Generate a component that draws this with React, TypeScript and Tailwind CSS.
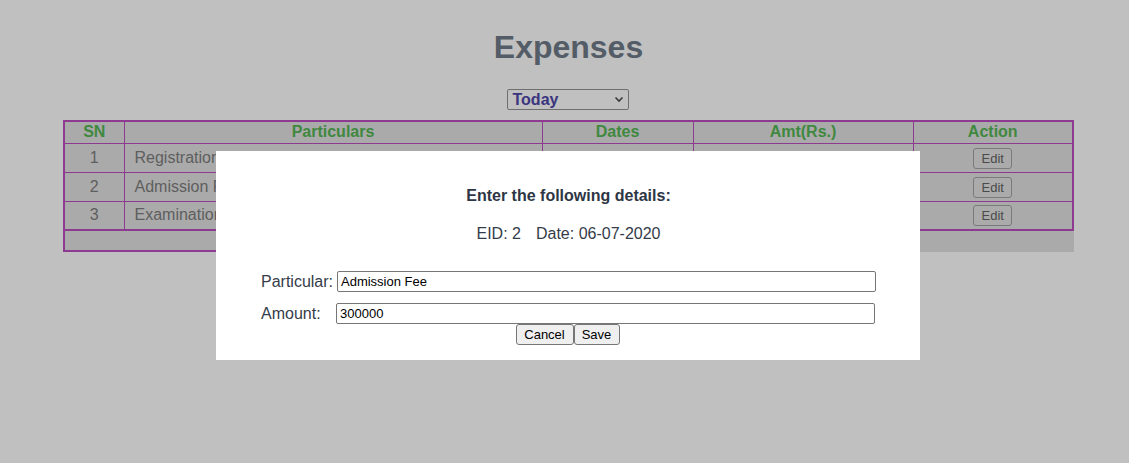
import React from "react";

interface Expense {
    sn: number,
    particular: string,
    date: string,
    amount: string
}

const expenses: Expense[] = [
    { sn: 1, particular: "Registration Fee", date: "06-07-2020", amount: "2500" },
    { sn: 2, particular: "Admission Fee", date: "06-07-2020", amount: "300000" },
    { sn: 3, particular: "Examination Fee", date: "06-07-2020", amount: "1500" },
];

export default function App() {
    return (
        <div className="relative w-[1129px] h-[463px] bg-[#c0c0c0] overflow-hidden" style={{ fontFamily: '"Liberation Sans", Arial, sans-serif' }}>
            <div className="ml-[63px] w-[1011px] pt-[29px] flex flex-col items-center">
                <h1 className="text-[32px] leading-[37px] font-bold text-[#545d67]">Expenses</h1>
                <div className="mt-[23px] mr-[2px] w-[122px] h-[21px] border border-[#6f6f6f] rounded-[2px] flex items-center justify-between pl-[5px] pr-[4px]">
                    <span className="text-[16px] font-bold text-[#3b357f] leading-none">Today</span>
                    <svg width="10" height="7" viewBox="0 0 10 7">
                        <path d="M1.5 1.5 L5 5 L8.5 1.5" fill="none" stroke="#3a3a3a" strokeWidth="1.6" />
                    </svg>
                </div>
                <div className="mt-[10px] w-[1011px] bg-[#aaaaaa]">
                    <table className="w-[1009px] table-fixed border-collapse border-2 border-[#8c3b90] text-[16px]">
                        <colgroup>
                            <col className="w-[60px]" />
                            <col className="w-[418px]" />
                            <col className="w-[151px]" />
                            <col className="w-[220px]" />
                            <col className="w-[160px]" />
                        </colgroup>
                        <thead>
                            <tr className="h-[22px] text-[#3f883f] font-bold">
                                <th className="border border-[#8c3b90] leading-[18px]">SN</th>
                                <th className="border border-[#8c3b90] leading-[18px]">Particulars</th>
                                <th className="border border-[#8c3b90] leading-[18px]">Dates</th>
                                <th className="border border-[#8c3b90] leading-[18px]">Amt(Rs.)</th>
                                <th className="border border-[#8c3b90] leading-[18px]">Action</th>
                            </tr>
                        </thead>
                        <tbody>
                            {expenses.map((e) => (
                                <tr key={e.sn} className="h-[29px] text-[#5e5e5e]">
                                    <td className="border border-[#8c3b90] text-center">{e.sn}</td>
                                    <td className="border border-[#8c3b90] pl-[10px]">{e.particular}</td>
                                    <td className="border border-[#8c3b90] text-center">{e.date}</td>
                                    <td className="border border-[#8c3b90] text-right pr-[10px]">{e.amount}</td>
                                    <td className="border border-[#8c3b90] text-center">
                                        <button className="w-[39px] h-[21px] border border-[#7a7a7a] rounded-[3px] bg-[#ababab] text-[13px] text-[#4a4a4a] leading-none">Edit</button>
                                    </td>
                                </tr>
                            ))}
                        </tbody>
                    </table>
                    <div className="flex h-[21px]">
                        <div className="w-[700px] border-l-2 border-b-2 border-[#8c3b90]"></div>
                    </div>
                </div>
            </div>

            <div className="absolute left-[216px] top-[151px] w-[704px] h-[209px] bg-white pl-[45px] pr-[44px] pt-[36px] text-[#343c49]">
                <p className="text-center font-bold text-[16px] leading-[18px] text-[#2e3645]">Enter the following details:</p>
                <p className="mt-[20px] text-center text-[16px] leading-[18px]">
                    EID: 2<span className="inline-block w-[15px]"></span>Date: 06-07-2020
                </p>
                <div className="mt-[28px] flex items-center h-[21px]">
                    <span className="text-[16px] w-[76px]">Particular:</span>
                    <div className="flex-1 h-[21px] border border-[#767676] rounded-[2px] flex items-center px-[3px] text-[13px] text-black">Admission Fee</div>
                </div>
                <div className="mt-[11px] flex items-center h-[21px]">
                    <span className="text-[16px] w-[75px]">Amount:</span>
                    <div className="flex-1 mr-[1px] h-[21px] border border-[#767676] rounded-[2px] flex items-center px-[3px] text-[13px] text-black">300000</div>
                </div>
                <div className="flex justify-center mr-[2px]">
                    <button className="h-[21px] w-[58px] border border-[#767676] rounded-[3px] bg-[#efefef] text-[13px] text-black leading-none">Cancel</button>
                    <button className="h-[21px] w-[46px] border border-[#767676] rounded-[3px] bg-[#efefef] text-[13px] text-black leading-none">Save</button>
                </div>
            </div>
        </div>
    );
}
